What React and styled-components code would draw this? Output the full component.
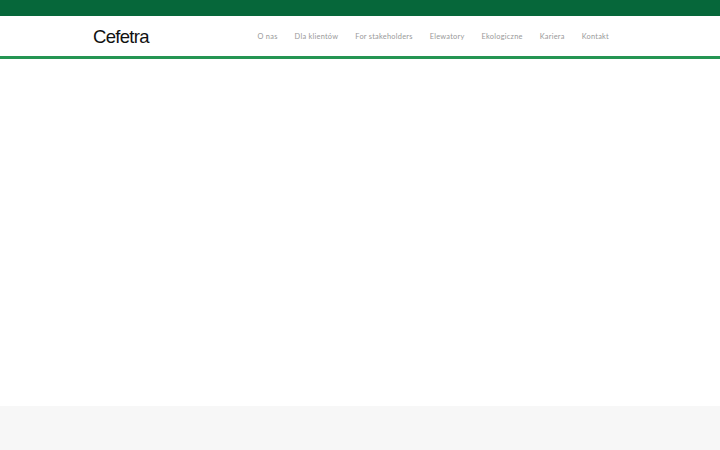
import React from 'react';
import styled, { createGlobalStyle } from 'styled-components';

const GlobalStyle = createGlobalStyle`
	html, body {
		margin: 0;
		padding: 0;
		background: #fff;
		font-family: Lato, "Liberation Sans", sans-serif;
	}
`;

const Page = styled.div`
	display: flex;
	flex-direction: column;
	height: 450px;
	overflow: hidden;
`;

const TopBar = styled.div`
	height: 16px;
	background: #06673a;
`;

const Header = styled.header`
	display: flex;
	align-items: center;
	justify-content: space-between;
	height: 40px;
	padding: 0 111px 0 93px;
	border-bottom: 3px solid #259553;
`;

const Logo = styled.a`
	font-family: "Liberation Sans", Arial, sans-serif;
	font-size: 18.5px;
	letter-spacing: -0.7px;
	line-height: 1;
	color: #111;
	margin-top: 3px;
`;

const Nav = styled.nav`
	display: flex;
	gap: 17px;
	margin-top: 2px;
`;

const NavLink = styled.a`
	font-size: 7.4px;
	letter-spacing: 0.25px;
	color: #999;
	line-height: 1;
`;

const Main = styled.main`
	flex: 1;
	background: #fff;
`;

const Footer = styled.footer`
	height: 44px;
	background: #f7f7f7;
`;

const links = ['O nas', 'Dla klientów', 'For stakeholders', 'Elewatory', 'Ekologiczne', 'Kariera', 'Kontakt'];

export default function App() {
	return (
		<Page>
			<GlobalStyle />
			<TopBar />
			<Header>
				<Logo>Cefetra</Logo>
				<Nav>
					{links.map((link) => (
						<NavLink key={link}>{link}</NavLink>
					))}
				</Nav>
			</Header>
			<Main />
			<Footer />
		</Page>
	);
}
